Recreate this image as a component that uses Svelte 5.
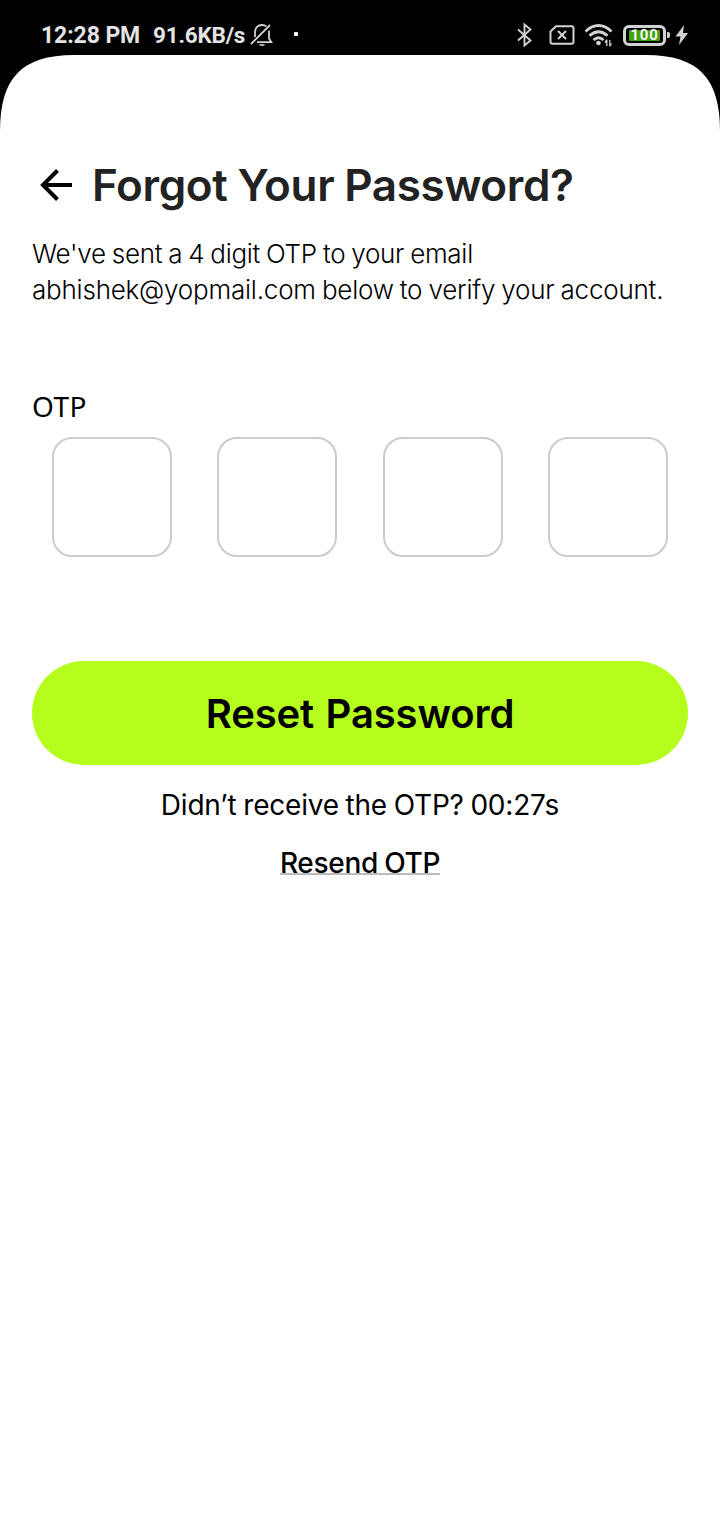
<script>
  const boxes = [0, 1, 2, 3];
</script>

<div class="screen">
  <header class="status">
    <div class="left">
      <span class="time">12:28 PM</span>
      <span class="rate">91.6KB/s</span>
      <svg class="bell" width="24" height="24" viewBox="0 0 24 24" fill="none" stroke="#d2d2d2" stroke-width="1.8">
        <path d="M1 21 20 2" />
        <path d="M5 14V9C5 4.800 8 2 12 2c1.800 0 3.200.5 4.400 1.400M19 7.500V15.500l2.300 3.700H7" />
        <path d="M9.500 21.500q2.500 1.500 5 0" fill="#d2d2d2" stroke-width="1.400" />
      </svg>
      <i class="dot"></i>
    </div>
    <div class="right">
      <svg class="bt" width="18" height="26" viewBox="0 0 18 26" fill="none" stroke="#d2d2d2" stroke-width="1.9">
        <path d="M2 7.500 14.500 18.500 8.500 23.500V2.500L14.500 7.500 2 18.500" />
      </svg>
      <svg class="sim" width="26" height="20" viewBox="0 0 26 20" fill="none" stroke="#d2d2d2" stroke-width="2">
        <path d="M7 1.200H22.500Q24.500 1.200 24.500 3.200V16.800Q24.500 18.800 22.500 18.800H3.500Q1.500 18.800 1.500 16.800V6.500Z" stroke-linejoin="round" />
        <path d="m9 6 8 8m0-8-8 8" />
      </svg>
      <svg class="wifi" width="30" height="24" viewBox="0 0 30 24" fill="none" stroke="#d2d2d2" stroke-width="2.900">
        <path d="M1.500 8.500Q14.500-3.300 27.500 8.500M5.500 12.700Q14.500 4.700 23.500 12.700M9.500 17Q14.500 12.300 19.500 17" />
        <circle cx="14.500" cy="20" r="2.300" fill="#d2d2d2" stroke="none" />
        <path d="M22.800 23V16.500M25.800 17V23.500M21 19.500l1.800-2.500M27.500 20.500l-1.700 2.500" stroke-width="1.300" />
      </svg>
      <div class="battery"><span>100</span></div>
      <i class="nub"></i>
      <svg class="bolt" width="14" height="20" viewBox="0 0 14 20"><path d="M9 0 .5 11.500H5.500L4 20 13 8H8Z" fill="#d2d2d2" /></svg>
    </div>
  </header>

  <svg class="corners" width="720" height="76" viewBox="0 0 720 76">
    <path d="M0 76C0 24 21 0 74 0H646C699 0 720 24 720 76Z" fill="#fff" />
  </svg>

  <main>
    <div class="title">
      <svg width="32" height="32" viewBox="0 0 32 32" fill="none" stroke="#000" stroke-width="4">
        <path d="M32 16H3M17.500 1.500 3 16 17.500 30.500" />
      </svg>
      <h1>Forgot Your Password?</h1>
    </div>
    <p class="info"><span class="l1">We've sent a 4 digit OTP to your email</span><br /><span class="l2">abhishek@yopmail.com below to verify your account.</span></p>
    <div class="label">OTP</div>
    <div class="otp">
      {#each boxes as box (box)}
        <input aria-label="OTP" maxlength="1" />
      {/each}
    </div>
    <button><span>Reset Password</span></button>
    <p class="timer"><span>Didn’t receive the OTP? 00:27s</span></p>
    <div class="resend"><span>Resend OTP</span></div>
  </main>
</div>

<style>
  :global(body) { margin: 0; background: #000; }
  .screen { width: 720px; height: 1520px; overflow: hidden; background: #000; display: flex; flex-direction: column; font-family: Inter, sans-serif; color: #000; white-space: nowrap; }
  svg { display: block; flex: none; }
  .status { height: 55px; box-sizing: border-box; padding: 15px 31px 0 41px; display: flex; justify-content: space-between; font-family: Roboto, sans-serif; font-weight: 700; color: #e4e4e4; }
  .left, .right { display: flex; align-items: center; height: 40px; }
  .time { font-size: 23px; width: 112px; letter-spacing: -0.1px; }
  .rate { font-size: 22.5px; width: 97px; letter-spacing: -0.2px; }
  .dot { width: 4px; height: 4px; border-radius: 1px; background: #fff; margin-left: 20px; margin-top: -2px; }
  .bt { margin-right: 15px; }
  .sim { margin-right: 9px; }
  .wifi { margin-right: 9px; }
  .battery { width: 43px; height: 21px; box-sizing: border-box; border: 3px solid #d2d2d2; border-radius: 6px; padding: 2px 3px; display: flex; }
  .battery span { flex: 1; background: #43a010; border-radius: 1px; color: #fff; font-size: 15px; font-weight: 600; line-height: 11px; text-align: center; letter-spacing: 0.7px; }
  .nub { width: 3px; height: 6px; background: #d2d2d2; margin: 0 5px 0 1px; border-radius: 0 2px 2px 0; }
  .corners { margin-bottom: -1px; }
  main { background: #fff; flex: 1; padding: 30px 32px 0; }
  .title { display: flex; align-items: center; height: 50px; padding-left: 8px; }
  h1 { margin: 0 0 0 20px; font-size: 44px; font-weight: 600; line-height: 50px; color: #222; letter-spacing: -0.35px; word-spacing: -0.8px; }
  .info { margin: 26px 0 0; font-size: 26px; font-weight: 300; line-height: 36px; word-spacing: -1px; }
  .l1 { letter-spacing: -0.29px; }
  .l2 { letter-spacing: -0.22px; }
  .label { margin-top: 79px; font-family: "Noto Sans", sans-serif; font-size: 28px; line-height: 38px; letter-spacing: 0.4px; }
  .otp { display: flex; justify-content: space-between; padding: 0 20px; margin-top: 12px; }
  input { width: 120px; height: 120px; box-sizing: border-box; border: 2px solid #ccc; border-radius: 20px; padding: 0; background: #fff; outline: 0; }
  button { display: block; width: 656px; height: 104px; margin-top: 104px; border: 0; border-radius: 52px; background: #b4fd1d; color: #000; font: 600 40px/102px Inter, sans-serif; padding: 2px 0 0; text-align: center; letter-spacing: -0.12px; word-spacing: 1.5px; }
  .timer { margin: 20px 0 0; font-size: 28px; line-height: 40px; text-align: center; letter-spacing: -0.2px; word-spacing: -1px; }
  .resend { margin-top: 18px; font-size: 28px; line-height: 40px; font-weight: 500; text-align: center; letter-spacing: -0.3px; word-spacing: -1px; }
  .resend span { text-decoration: underline; text-decoration-color: #bbb; text-decoration-thickness: 2px; text-underline-offset: 0; text-decoration-skip-ink: none; }
</style>
